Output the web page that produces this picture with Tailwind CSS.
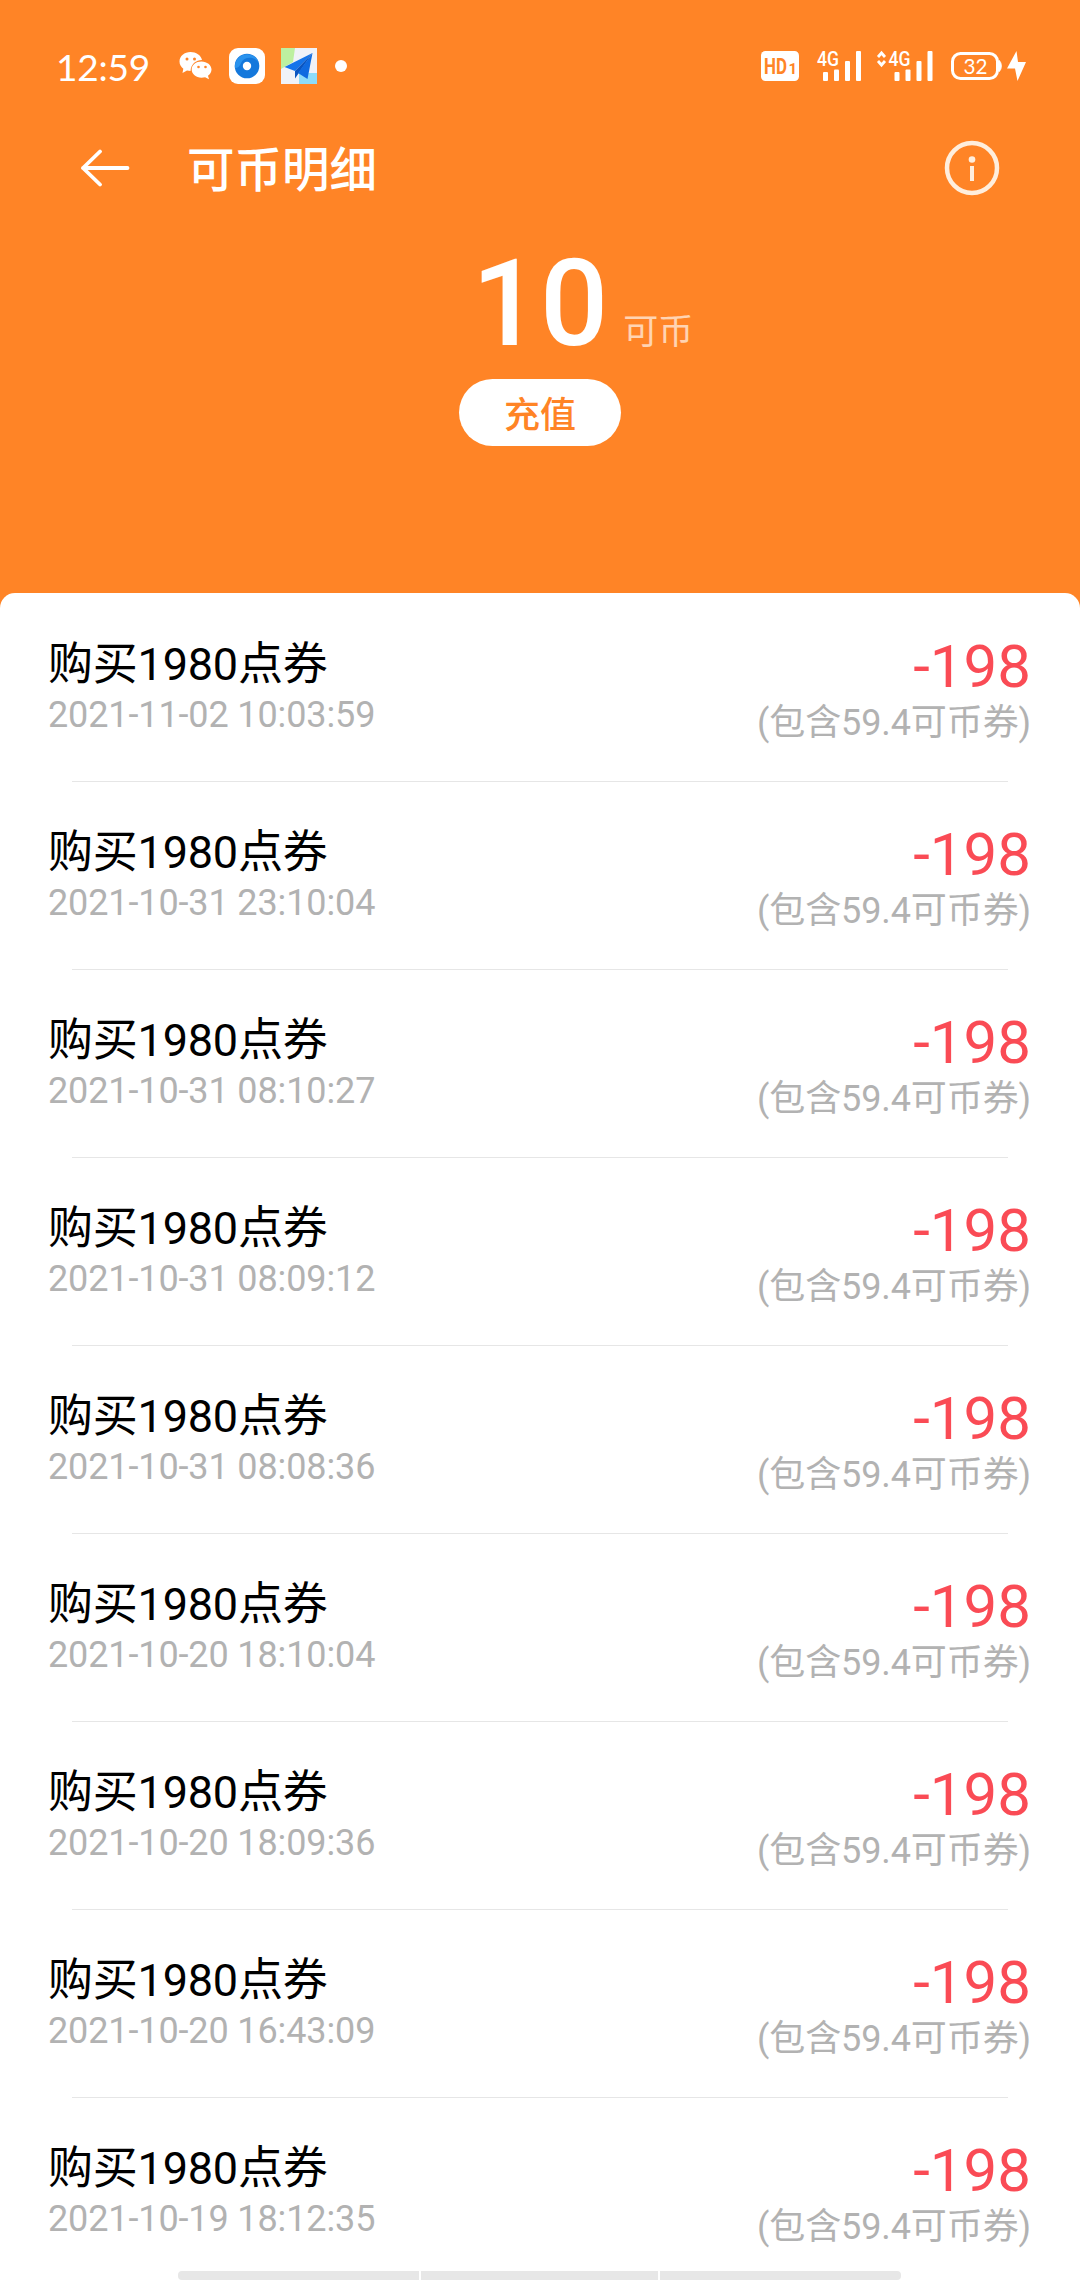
<!DOCTYPE html>
<html lang="zh-CN">
<head>
  <meta charset="UTF-8" />
  <meta name="viewport" content="width=device-width, initial-scale=1.0"/>
  <title>可币明细</title>
  <script src="https://cdn.jsdelivr.net/npm/@tailwindcss/browser@4"></script>
</head>
<body class="bg-[#ff8426] font-[Roboto,'Noto_Sans_CJK_SC',sans-serif]">
  <div class="relative w-[1080px] h-[2280px] overflow-hidden flex flex-col">

    <!-- Status Bar -->
    <div class="h-[132px] shrink-0 flex items-center justify-between pl-[56px] pr-[54px] text-white">
      <div class="flex items-center">
        <span class="w-[123px] pt-[2px] font-[Lato,sans-serif] text-[37px] leading-[36px] tracking-[-0.2px]">12:59</span>
        <!-- WeChat -->
        <svg class="w-[34px] h-[30px] mr-[16px]" viewBox="0 0 34 30">
          <path d="M11.500 1C5.500 1 0.500 5 0.500 10.500c0 3 1.500 5.500 3.800 7.200L3.500 22l4.500-2.500c1 .3 2.300.4 3.500.4C12 13 17 9 23 9C22 4 17 1 11.500 1z" fill="#fff"/>
          <path d="M22.500 10.500c-5.500 0-9.800 3.500-9.800 8s4.300 8.200 9.800 8.200c1.300 0 2.500-.2 3.600-.5l3.900 2-1-3.400c2.200-1.500 3.500-3.700 3.500-6.200 0-4.500-4.500-8.100-10-8.100z" fill="#fff"/>
          <g fill="#ff8426"><circle cx="8" cy="8" r="1.500"/><circle cx="15.500" cy="8" r="1.500"/><circle cx="19.500" cy="16" r="1.300"/><circle cx="26.500" cy="16" r="1.300"/></g>
        </svg>
        <!-- Browser -->
        <svg class="w-[36px] h-[36px] mr-[16px]" viewBox="0 0 36 36">
          <rect width="36" height="36" rx="9" fill="#fff"/>
          <circle cx="18" cy="18" r="12.300" fill="#1478dc"/>
          <path d="M6 20A12.300 12.300 0 0 1 30 15C26 8 15 8 12 15C11 18 9 20 6 20z" fill="#2a93ee"/>
          <circle cx="18" cy="18" r="4.200" fill="#fff"/>
        </svg>
        <!-- Map -->
        <svg class="w-[36px] h-[36px] mr-[18px]" viewBox="0 0 36 36">
          <rect width="36" height="36" fill="#f0f2f8"/>
          <path d="M0 0h14l-2 14L0 21z" fill="#bdf0a0"/>
          <path d="M18 25h18v11H18z" fill="#8edcf8"/>
          <path d="M31.500 5L3.500 19l10.500 4z" fill="#1474ea"/>
          <path d="M31.500 5L14 23v7.500l3.500-5z" fill="#0a55c0"/>
          <path d="M31.500 5L17 25l9.500 6z" fill="#0f6ae0"/>
        </svg>
        <span class="w-3 h-3 rounded-full bg-white"></span>
      </div>

      <div class="flex items-center">
        <!-- HD -->
        <svg class="w-[38px] h-[30px] mr-[17px]" viewBox="0 0 38 30">
          <rect width="38" height="30" rx="4.500" fill="#fff"/>
          <text x="3" y="23" textLength="23" lengthAdjust="spacingAndGlyphs" font-family="Roboto" font-weight="700" font-size="22" fill="#ff8426">HD</text>
          <text x="27.500" y="23" font-family="Roboto" font-weight="700" font-size="15" fill="#ff8426">1</text>
        </svg>
        <!-- SIM 1 -->
        <svg class="w-[46px] h-[42px] mr-[14px]" viewBox="0 -6 46 42">
          <text x="1" y="15" textLength="22" lengthAdjust="spacingAndGlyphs" font-family="Roboto" font-weight="500" font-size="20" fill="#fff">4G</text>
          <g fill="#fff"><rect x="7" y="21" width="5" height="9" rx="1"/><rect x="18" y="18.500" width="5" height="11.500" rx="1"/><rect x="29" y="10" width="5" height="20" rx="1"/><rect x="40" y="0" width="5" height="30" rx="1"/></g>
        </svg>
        <!-- SIM 2 -->
        <svg class="w-[57px] h-[42px] mr-[18px]" viewBox="0 -6 57 42">
          <path d="M2 6l3.500-4L9 6M2 10l3.500 4L9 10" fill="none" stroke="#fff" stroke-width="2.800"/>
          <text x="12.500" y="15" textLength="22" lengthAdjust="spacingAndGlyphs" font-family="Roboto" font-weight="500" font-size="20" fill="#fff">4G</text>
          <g fill="#fff"><rect x="18.500" y="21" width="5" height="9" rx="1"/><rect x="29.500" y="18.500" width="5" height="11.500" rx="1"/><rect x="40.500" y="10" width="5" height="20" rx="1"/><rect x="51.500" y="0" width="5" height="30" rx="1"/></g>
        </svg>
        <!-- Battery -->
        <svg class="w-[75px] h-[30px]" viewBox="0 0 75 30">
          <rect x="1.500" y="2.500" width="45" height="25" rx="8" fill="none" stroke="#fff" stroke-width="3"/>
          <path d="M48 9.500c3 1.500 3 9.500 0 11z" fill="#fff" stroke="#fff"/>
          <text x="12.500" y="22.500" textLength="24" lengthAdjust="spacingAndGlyphs" font-family="Lato" font-size="22" fill="#fff">32</text>
          <path d="M65.500 0L56 17.500h8L66.500 30 75 11h-8z" fill="#fff"/>
        </svg>
      </div>
    </div>

    <!-- Title Bar -->
    <header class="h-[72px] shrink-0 flex items-center pl-[80px] pr-[80px] text-white">
      <svg class="w-[50px] h-[38px]" viewBox="0 0 50 38" fill="none" stroke="#fff" stroke-width="3.800" stroke-linecap="round" stroke-linejoin="round">
        <path d="M20 2.500L3 19l17 16.500M3 19h44.500"/>
      </svg>
      <h1 class="ml-[57px] pt-[6px] text-[47.5px] leading-[56px] font-medium">可币明细</h1>
      <svg class="ml-auto w-[56px] h-[56px]" viewBox="0 0 56 56">
        <circle cx="28" cy="28" r="25" fill="none" stroke="#ffeedd" stroke-width="4.500"/>
        <circle cx="28" cy="19.500" r="3.300" fill="#ffeedd"/>
        <rect x="26" y="26" width="4" height="15" fill="#ffeedd"/>
      </svg>
    </header>

    <!-- Balance -->
    <section class="h-[389px] shrink-0 flex flex-col items-center pt-[40px]">
      <div class="relative text-[120px] leading-[120px] font-medium text-white">
        10
        <span class="absolute left-full bottom-[11px] ml-[15px] text-[35px] leading-[40px] font-normal text-white/65 whitespace-nowrap">可币</span>
      </div>
      <button class="mt-[15px] w-[162px] h-[67px] pt-[7px] rounded-full bg-white text-[36px] leading-[60px] font-medium text-[#ff8426]">充值</button>
    </section>

    <!-- Records -->
    <ul id="records" class="grow pt-px bg-white rounded-t-[15px]"></ul>

    <!-- Gesture bar -->
    <div class="absolute left-[178px] bottom-0 w-[723px] h-[9px] flex gap-[2px] rounded-[4px] overflow-hidden">
      <span class="w-[241px] bg-[#e7e7e7]"></span>
      <span class="w-[237px] bg-[#e7e7e7]"></span>
      <span class="w-[241px] bg-[#e7e7e7]"></span>
    </div>
  </div>

  <script>
    const times = [
      '2021-11-02 10:03:59',
      '2021-10-31 23:10:04',
      '2021-10-31 08:10:27',
      '2021-10-31 08:09:12',
      '2021-10-31 08:08:36',
      '2021-10-20 18:10:04',
      '2021-10-20 18:09:36',
      '2021-10-20 16:43:09',
      '2021-10-19 18:12:35'
    ];

    document.getElementById('records').innerHTML = times.map(time => `
      <li class="h-[188px] flex flex-col">
        <div class="grow flex justify-between pl-[48px] pr-[49px]">
          <div class="pt-[47px]">
            <p class="text-[45px] leading-[48px] tracking-[-0.2px] text-black">购买1980点券</p>
            <p class="mt-[2px] text-[36px] leading-[48px] tracking-[-0.12px] text-[#b2b2b2]">${time}</p>
          </div>
          <div class="pt-[43px] text-right">
            <p class="text-[60px] leading-[60px] text-[#fa4b55]">-198</p>
            <p class="mt-[2px] text-[36px] leading-[48px] tracking-[-0.1px] text-[#b2b2b2]">(包含59.4可币券)</p>
          </div>
        </div>
        <div class="h-px mx-[72px] bg-[#e6e6e6]"></div>
      </li>`).join('');
  </script>
</body>
</html>
